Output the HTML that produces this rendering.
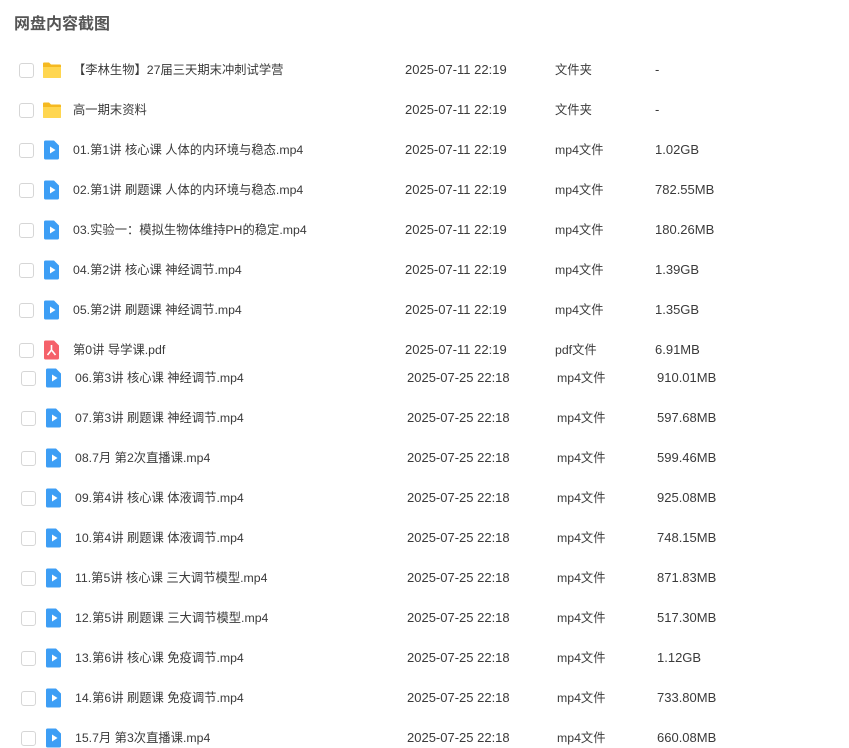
<!DOCTYPE html><html><head><meta charset="utf-8"><style>
body{margin:0;width:849px;height:740px;overflow:hidden;background:#fff;font-family:"Liberation Sans","Noto Sans CJK SC",sans-serif;color:#3a3a3a;font-size:13px;position:relative}
.t{position:absolute;left:14px;top:10px;font-size:16px;font-weight:bold;color:#555}
.r{position:absolute;height:20px;width:849px}
.r>*{position:absolute;top:0;line-height:20px;white-space:nowrap}
.n{font-size:12.3px}
.cb{width:13px;height:13px;border:1px solid #d6d6d6;border-radius:3px;top:3px!important;background:#fff}
.ic{width:20px;height:20px}
</style></head><body>
<div class="t">网盘内容截图</div>
<svg width="0" height="0" style="position:absolute"><defs>
<symbol id="fo" viewBox="0 0 20 20"><path d="M1 3.5a1 1 0 0 1 1-1h5l2 2h9a1 1 0 0 1 1 1V17a1 1 0 0 1-1 1H2a1 1 0 0 1-1-1z" fill="#f5b921"/><path d="M1 7h18v10a1 1 0 0 1-1 1H2a1 1 0 0 1-1-1z" fill="#ffd650"/></symbol>
<symbol id="vi" viewBox="0 0 20 20"><path d="M3 0.5h9l5 5V18a1.5 1.5 0 0 1-1.5 1.5h-12A1.5 1.5 0 0 1 2 18V2A1.5 1.5 0 0 1 3.5 .5z" fill="#3d9ef5"/><path d="M8 6.5l5.5 3.5-5.5 3.5z" fill="#fff"/></symbol>
<symbol id="pd" viewBox="0 0 20 20"><path d="M3 0.5h9l5 5V18a1.5 1.5 0 0 1-1.5 1.5h-12A1.5 1.5 0 0 1 2 18V2A1.5 1.5 0 0 1 3.5 .5z" fill="#f5616a"/><path d="M9.5 5v5M9.5 10l-4 5M9.5 10l4 5" stroke="#fff" stroke-width="1.6" fill="none"/></symbol>
</defs></svg>
<div id="c"></div>
<script>
var a=[["fo","【李林生物】27届三天期末冲刺试学营","2025-07-11 22:19","文件夹","-"],
["fo","高一期末资料","2025-07-11 22:19","文件夹","-"],
["vi","01.第1讲 核心课 人体的内环境与稳态.mp4","2025-07-11 22:19","mp4文件","1.02GB"],
["vi","02.第1讲 刷题课 人体的内环境与稳态.mp4","2025-07-11 22:19","mp4文件","782.55MB"],
["vi","03.实验一：模拟生物体维持PH的稳定.mp4","2025-07-11 22:19","mp4文件","180.26MB"],
["vi","04.第2讲 核心课 神经调节.mp4","2025-07-11 22:19","mp4文件","1.39GB"],
["vi","05.第2讲 刷题课 神经调节.mp4","2025-07-11 22:19","mp4文件","1.35GB"],
["pd","第0讲 导学课.pdf","2025-07-11 22:19","pdf文件","6.91MB"],
["vi","06.第3讲 核心课 神经调节.mp4","2025-07-25 22:18","mp4文件","910.01MB"],
["vi","07.第3讲 刷题课 神经调节.mp4","2025-07-25 22:18","mp4文件","597.68MB"],
["vi","08.7月 第2次直播课.mp4","2025-07-25 22:18","mp4文件","599.46MB"],
["vi","09.第4讲 核心课 体液调节.mp4","2025-07-25 22:18","mp4文件","925.08MB"],
["vi","10.第4讲 刷题课 体液调节.mp4","2025-07-25 22:18","mp4文件","748.15MB"],
["vi","11.第5讲 核心课 三大调节模型.mp4","2025-07-25 22:18","mp4文件","871.83MB"],
["vi","12.第5讲 刷题课 三大调节模型.mp4","2025-07-25 22:18","mp4文件","517.30MB"],
["vi","13.第6讲 核心课 免疫调节.mp4","2025-07-25 22:18","mp4文件","1.12GB"],
["vi","14.第6讲 刷题课 免疫调节.mp4","2025-07-25 22:18","mp4文件","733.80MB"],
["vi","15.7月 第3次直播课.mp4","2025-07-25 22:18","mp4文件","660.08MB"]];
var h="";a.forEach(function(r,i){var y=i<8?60+i*40:368+(i-8)*40,d=i<8?0:2;
h+='<div class="r" style="top:'+y+'px"><div class="cb" style="left:'+(19+d)+'px"></div><svg class="ic" style="left:'+(42+d)+'px"><use href="#'+r[0]+'"/></svg><div class="n" style="left:'+(73+d)+'px">'+r[1]+'</div><div style="left:'+(405+d)+'px">'+r[2]+'</div><div class="n" style="left:'+(555+d)+'px">'+r[3]+'</div><div style="left:'+(655+d)+'px">'+r[4]+'</div></div>';});
document.getElementById("c").innerHTML=h;
</script>
</body></html>
